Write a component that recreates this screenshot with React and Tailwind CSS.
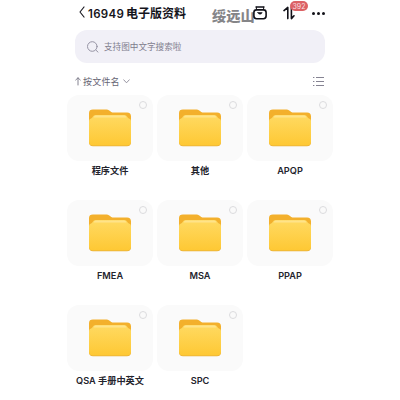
const rows = [
  ["程序文件", "其他", "APQP"],
  ["FMEA", "MSA", "PPAP"],
  ["QSA 手册中英文", "SPC"],
];

function Folder() {
  return (
    <svg width="42" height="38" viewBox="0 0 42 38" className="block">
      <defs>
        <linearGradient id="front" x1="0" y1="0" x2="0" y2="1">
          <stop offset="0" stopColor="#ffda62" />
          <stop offset="1" stopColor="#fec834" />
        </linearGradient>
      </defs>
      <path d="M0 13V4Q0 .6 4 .6H17.5Q19 .6 20.3 1.6L22.3 3Q23.2 3.6 24.7 3.6H38Q42 3.6 42 7.4V13Z" fill="#f3b02c" />
      <path d="M0 12Q0 10.2 1.6 9.8Q3.2 9.4 3.8 7.8Q4.6 6 6.6 6H35.4Q37.4 6 38.2 7.8Q38.8 9.4 40.4 9.8Q42 10.2 42 12V33.2Q42 37.2 38 37.2H4Q0 37.2 0 33.2Z" fill="#e8b03a" />
      <path d="M0 12Q0 10.2 1.6 9.8Q3.2 9.4 3.8 7.8Q4.6 6 6.6 6H35.4Q37.4 6 38.2 7.8Q38.8 9.4 40.4 9.8Q42 10.2 42 12V32.4Q42 36.4 38 36.4H4Q0 36.4 0 32.4Z" fill="url(#front)" />
      <path d="M4.6 8.4Q5.2 6.6 6.8 6.6H35.2Q36.8 6.6 37.4 8.4Z" fill="#ffe389" />
    </svg>
  );
}

function FolderCard({ name }) {
  return (
    <div className="flex w-[86px] flex-col items-center">
      <div className="flex h-[66px] w-full rounded-[12px] bg-[#fafafa] pt-[14px] pl-[22px]">
        <Folder />
        <span className="-mt-[8px] ml-[8px] size-[8px] rounded-full border border-[#dcdcde]" />
      </div>
      <span className="mt-[3px] text-[9.2px] leading-[14px] font-semibold whitespace-nowrap text-[#24242d]">{name}</span>
    </div>
  );
}

function Header() {
  return (
    <header className="flex h-[30px] items-start pl-[12px]">
      <svg width="6" height="12" viewBox="0 0 6 12" className="mt-[6px]" fill="none" stroke="#181820" strokeWidth="1.2" strokeLinecap="round" strokeLinejoin="round">
        <path d="M5 1L1 6L5 11" />
      </svg>
      <h1 className="mt-[6px] ml-[3px] flex w-[100px] text-[11.5px] leading-[16px] font-semibold whitespace-nowrap text-[#15151c]">
        <span className="w-[38px] tracking-[0.3px]">16949</span>
        <span className="text-[12px] font-bold">电子版资料</span>
      </h1>
      <span className="mt-[7px] ml-[24px] w-[41px] text-[14.2px] leading-[17px] font-black whitespace-nowrap text-[#858588]">绥远山</span>
      <svg width="14" height="14" viewBox="0 0 14 14" className="relative mt-[6px]" fill="none" stroke="#111118" strokeWidth="1.6" strokeLinecap="round" strokeLinejoin="round">
        <path d="M3 1H11" strokeWidth="1.4" />
        <path d="M3.4 1.2V3.6M10.6 1.2V3.6" strokeWidth="1" />
        <rect x=".9" y="3.9" width="12.2" height="8.8" rx="2.6" />
        <path d="M4.8 6.6H9.2Q8.6 8.2 7 8.2Q5.4 8.2 4.8 6.6Z" fill="#111118" strokeWidth=".6" />
      </svg>
      <div className="relative ml-[16px] w-[13px]">
        <svg width="13" height="14" viewBox="0 0 13 14" className="mt-[6px]" fill="none" stroke="#111118" strokeWidth="1.6" strokeLinecap="round" strokeLinejoin="round">
          <path d="M1 4.6L4.8 1.4V12.6M8.4 1.4V12.6L11 9.8" />
        </svg>
        <span className="absolute top-[1px] left-[7px] flex h-[10px] w-[18px] items-center justify-center rounded-full bg-[#dc6265] text-[7px] leading-none text-[#f8dfe0]">392</span>
      </div>
      <div className="mt-[12px] ml-[16px] flex gap-[2.6px]">
        <i className="size-[2.6px] rounded-full bg-[#111118]" />
        <i className="size-[2.6px] rounded-full bg-[#111118]" />
        <i className="size-[2.6px] rounded-full bg-[#111118]" />
      </div>
    </header>
  );
}

export default function App() {
  return (
    <div className="h-[400px] w-[400px] overflow-hidden bg-white font-[Inter,'Noto_Sans_CJK_SC',sans-serif]">
      <main className="ml-[67px] w-[266px]">
        <Header />
        <div className="mx-[8px] flex h-[33px] items-center rounded-[12px] bg-[#f1f0f7] pl-[12px]">
          <svg width="12" height="12" viewBox="0 0 12 12" fill="none" stroke="#9694a4" strokeWidth="1" strokeLinecap="round">
            <circle cx="5.3" cy="5.5" r="4.8" />
            <path d="M9 9.2L11 11.1" />
          </svg>
          <span className="ml-[5px] text-[8.6px] leading-[12px] text-[#7f7d8d]">支持图中文字搜索啦</span>
        </div>
        <div className="flex h-[32px] items-center px-[8px] pt-[5px] text-[9px] leading-[12px] text-[#666473]">
          <svg width="6" height="9" viewBox="0 0 6 9" fill="none" stroke="#777584" strokeWidth=".9" strokeLinecap="round" strokeLinejoin="round">
            <path d="M.7 3L3 .8L5.3 3M3 .8V8" />
          </svg>
          <span className="ml-[2px] tracking-[0.2px]">按文件名</span>
          <svg width="7" height="5" viewBox="0 0 7 5" className="ml-[3px]" fill="none" stroke="#8b8996" strokeWidth=".9" strokeLinecap="round" strokeLinejoin="round">
            <path d="M.7 .8L3.5 3.8L6.3 .8" />
          </svg>
          <svg width="11" height="9" viewBox="0 0 11 9" className="mr-[1px] ml-auto" fill="none" stroke="#858392" strokeWidth="1">
            <path d="M0 .5H1.4M3 .5H11M0 4.5H1.4M3 4.5H11M0 8.5H1.4M3 8.5H11" />
          </svg>
        </div>
        <div className="flex flex-col gap-[22px]">
          {rows.map((row) => (
            <div key={row[0]} className="flex gap-[4px]">
              {row.map((name) => (
                <FolderCard key={name} name={name} />
              ))}
            </div>
          ))}
        </div>
      </main>
    </div>
  );
}
